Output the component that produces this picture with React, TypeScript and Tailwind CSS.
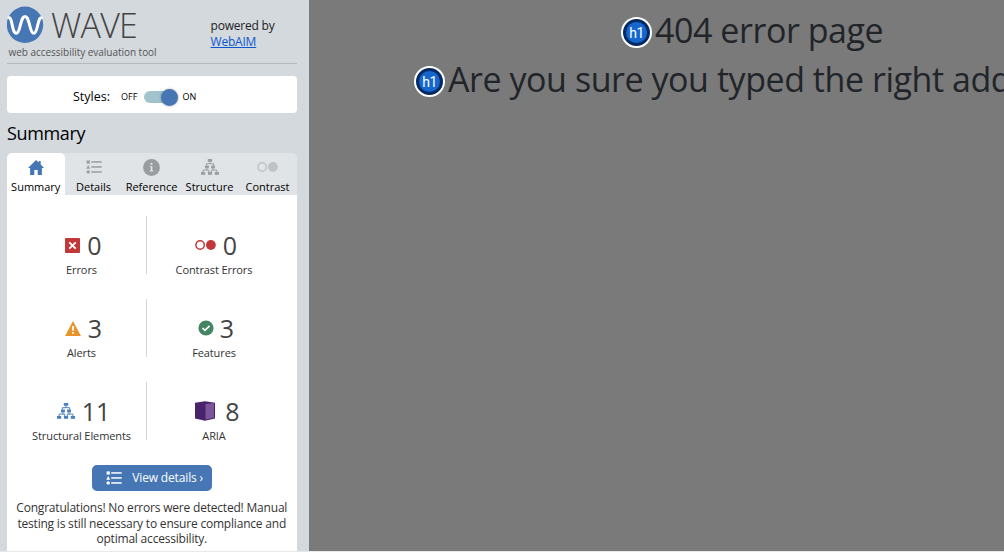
import type { ReactNode } from "react";

function ListIcon({ className }: { className?: string }) {
  return (
    <svg className={className} viewBox="0 0 16 14" fill="currentColor">
      <rect x="0.6" y="0.4" width="3.2" height="3.2" />
      <path d="M2.200 4.900 4.200 8.700H.2z" />
      <circle cx="2.2" cy="11.900" r="1.700" />
      <rect x="5.2" y="1.200" width="10.500" height="1.500" />
      <rect x="5.2" y="6.200" width="10.500" height="1.500" />
      <rect x="5.2" y="11.200" width="10.500" height="1.500" />
    </svg>
  );
}

function TreeIcon({ className }: { className?: string }) {
  return (
    <svg className={className} viewBox="0 0 18 16" fill="currentColor">
      <rect x="6.8" y="0" width="4.4" height="2.8" />
      <rect x="4" y="6.500" width="3.900" height="2.900" />
      <rect x="10.100" y="6.500" width="3.900" height="2.900" />
      <rect x="0" y="13" width="4.200" height="2.800" />
      <rect x="6.900" y="13" width="4.200" height="2.800" />
      <rect x="13.800" y="13" width="4.200" height="2.800" />
      <path
        d="M9 2.800v1.900M5.400 6.500V4.700h7.200v1.800M5.900 9.200v1.900M12.100 9.200v1.900M2.100 13v-1.900h5.600V13M10.300 13v-1.900h5.600V13"
        fill="none"
        stroke="currentColor"
        strokeWidth="1"
      />
    </svg>
  );
}

function ContrastIcon({ className }: { className?: string }) {
  return (
    <svg className={className} viewBox="0 0 21 10">
      <circle cx="5.100" cy="5" r="4.200" fill="none" stroke="currentColor" strokeWidth="1.500" />
      <circle cx="15.900" cy="5" r="4.900" fill="currentColor" />
    </svg>
  );
}

function Tab({ label, icon, active }: { label: string; icon: ReactNode; active?: boolean }) {
  return (
    <div
      className={
        active
          ? "flex w-[57.500px] shrink-0 flex-col items-center rounded-t-[5px] bg-white"
          : "flex w-[58px] shrink-0 flex-col items-center"
      }
    >
      <div className="flex h-[27px] items-center pt-[1px]">{icon}</div>
      <span className="whitespace-nowrap text-[11px] leading-[14px] text-black">{label}</span>
    </div>
  );
}

function Stat({ icon, value, label, first }: { icon: ReactNode; value: number; label: string; first?: boolean }) {
  return (
    <div
      className={
        first
          ? "flex h-[58px] w-[140px] flex-col items-center border-r border-[#cfd4d8] pl-[10px]"
          : "flex h-[58px] w-[134px] flex-col items-center"
      }
    >
      <div className="flex h-[46px] items-center pl-[4px] pt-[12px]">
        {icon}
        <span className="text-[25px] leading-[34px] text-[#444]">{value}</span>
      </div>
      <span className="whitespace-nowrap text-[11px] leading-[15px] tracking-[-0.1px] text-[#333]">{label}</span>
    </div>
  );
}

function HeadingBadge() {
  return (
    <span className="mt-[5px] flex size-[31px] shrink-0 items-center justify-center rounded-full bg-white">
      <span className="flex size-[27px] items-center justify-center rounded-full border-[3.5px] border-[#042a63] bg-[#1567cf] pt-[1px] font-['Roboto',sans-serif] text-[14px] leading-none tracking-[-0.5px] text-white">
        h1
      </span>
    </span>
  );
}

export default function App() {
  return (
    <div className="flex h-[552px] w-[1004px] overflow-hidden bg-[#7a7a7a] font-['Open_Sans',sans-serif]">
      <aside className="h-[552px] w-[309px] shrink-0 border-b border-[#e7eaeb] bg-[#d4d9dd] pl-[7px]">
        <header className="flex h-[64px] w-[289.5px] border-b border-[#b4babe]">
          <div className="w-[203.5px] pt-[6px]">
            <div className="flex h-[37px] items-center">
              <svg className="size-[37px]" viewBox="0 0 37 37">
                <circle cx="18" cy="18.800" r="18.200" fill="#4677b4" />
                <path
                  d="M1 12.500C3 10.500 4 13 5 18S6.700 27.300 9.300 27.300 12.500 22 13.800 17.500 15.800 10.500 18 10.500 20.900 13 22.200 17.500 24.100 27.300 26.700 27.300 30 22 31 18 33 10.500 35.200 12.500"
                  fill="none"
                  stroke="#fff"
                  strokeWidth="3"
                />
              </svg>
              <span className="ml-[7px] pt-[2px] text-[34px] font-light leading-[35px] tracking-[-0.8px] text-[#444]">
                WAVE
              </span>
            </div>
            <div className="ml-[1.5px] whitespace-nowrap text-[10px] leading-[19px] tracking-[-0.03px] text-[#555]">
              web accessibility evaluation tool
            </div>
          </div>
          <div className="pt-[18px] text-[12px] leading-[16px] tracking-[-0.2px] text-[#222]">
            powered by
            <br />
            <a className="text-[#0b57d0] underline">WebAIM</a>
          </div>
        </header>

        <section className="mt-[12px] flex h-[37px] w-[289.5px] items-center rounded-[4px] bg-white pl-[66px] pt-[5px] text-black">
          <span className="w-[48px] text-[12.5px]">Styles:</span>
          <span className="w-[23px] text-[9px]">OFF</span>
          <span className="flex h-[12px] w-[34px] items-center justify-end rounded-full bg-[#a1c3cb]">
            <span className="size-[17px] shrink-0 rounded-full bg-[#4677b4] shadow-[0_0_2px_1px_rgba(0,0,0,0.15)]" />
          </span>
          <span className="ml-[4.500px] text-[9px]">ON</span>
        </section>

        <h1 className="mt-[8px] h-[32px] text-[18px] leading-[24px] tracking-[-0.35px] text-black">Summary</h1>

        <nav className="flex h-[42px] w-[289.5px] rounded-t-[5px] bg-[#e0e4e6]">
          <Tab
            active
            label="Summary"
            icon={
              <svg className="h-[15px] w-[16px]" viewBox="0 0 16 15" fill="#4677b4">
                <path d="M8 0 0 7.900h2.100V15h4.200v-5h3.400v5h4.200V7.900H16l-3.300-3.400V1h-2v1.600z" />
              </svg>
            }
          />
          <Tab label="Details" icon={<ListIcon className="h-[14px] w-[16px] text-[#9c9fa1]" />} />
          <Tab
            label="Reference"
            icon={
              <svg className="size-[17px]" viewBox="0 0 17 17">
                <circle cx="8.500" cy="8.500" r="8.400" fill="#999c9e" />
                <circle cx="8.500" cy="4.800" r="1.100" fill="#e0e4e6" />
                <path d="M6.800 7.200h2.600v4.400h1v1H6.700v-1h1V8.200h-.9z" fill="#e0e4e6" />
              </svg>
            }
          />
          <Tab label="Structure" icon={<TreeIcon className="h-[16px] w-[18px] text-[#9c9fa1]" />} />
          <Tab label="Contrast" icon={<ContrastIcon className="h-[10px] w-[21px] text-[#bfc3c5]" />} />
        </nav>

        <main className="flex h-[356px] w-[289.5px] flex-col bg-white pt-[21px]">
          <div className="flex flex-col gap-[25px]">
            <div className="flex">
              <Stat
                first
                value={0}
                label="Errors"
                icon={
                  <svg className="mr-[7px] size-[15px]" viewBox="0 0 15 15">
                    <rect width="15" height="15" rx="1" fill="#c23838" />
                    <path d="m4.300 4.300 6.400 6.400m0-6.400-6.400 6.400" stroke="#fff" strokeWidth="1.800" />
                  </svg>
                }
              />
              <Stat value={0} label="Contrast Errors" icon={<ContrastIcon className="mr-[7px] h-[10px] w-[21px] text-[#c23838]" />} />
            </div>
            <div className="flex">
              <Stat
                first
                value={3}
                label="Alerts"
                icon={
                  <svg className="mr-[7px] h-[15px] w-[16px]" viewBox="0 0 16 15">
                    <path d="M8 0 16 15H0z" fill="#ea932d" />
                    <path d="M7.100 5h1.800v4.800H7.100zM7.100 11h1.800v1.800H7.100z" fill="#fff" />
                  </svg>
                }
              />
              <Stat
                value={3}
                label="Features"
                icon={
                  <svg className="mr-[6px] size-[16px]" viewBox="0 0 16 16">
                    <circle cx="8" cy="8" r="7.600" fill="#448563" />
                    <path d="m4.500 8 2.400 2.400 4.700-4.600" fill="none" stroke="#fff" strokeWidth="1.700" />
                  </svg>
                }
              />
            </div>
            <div className="flex">
              <Stat first value={11} label="Structural Elements" icon={<TreeIcon className="mr-[7px] h-[16px] w-[18px] text-[#4a80bf]" />} />
              <Stat
                value={8}
                label="ARIA"
                icon={
                  <svg className="ml-[3px] mr-[10px] h-[20px] w-[20px]" viewBox="0 0 20 20">
                    <path d="m0 1.700 10-1.500 10 1.500v15.800L10 19.700 0 17.500z" fill="#48246c" />
                    <path d="m10.500 3 8.500-1v14.700l-8.500 1.800z" fill="#7b5597" />
                  </svg>
                }
              />
            </div>
          </div>
          <button className="mx-auto mt-[25px] flex h-[26px] w-[120px] shrink-0 items-center whitespace-nowrap rounded-[5px] bg-[#4677b4] pl-[14px] text-[12px] tracking-[-0.15px] text-white">
            <ListIcon className="mr-[10.5px] h-[14px] w-[16px]" />
            View details ›
          </button>
          <p className="mt-[9px] whitespace-nowrap text-center text-[12px] leading-[15.7px] tracking-[-0.2px] text-[#333]">
            Congratulations! No errors were detected! Manual
            <br />
            testing is still necessary to ensure compliance and
            <br />
            optimal accessibility.
          </p>
        </main>
      </aside>

      <div className="h-[552px] grow overflow-hidden border-b border-[#e7eaeb] bg-[#7a7a7a] pt-[6px] text-[34px] leading-[48px] tracking-[-0.45px] text-[#212529]">
        <div className="flex h-[48px] items-center whitespace-nowrap pl-[312px]">
          <HeadingBadge />
          <span className="ml-[3px]">404 error page</span>
        </div>
        <div className="flex h-[49px] items-center whitespace-nowrap pl-[105px]">
          <HeadingBadge />
          <span className="ml-[3px]">Are you sure you typed the right address?</span>
        </div>
      </div>
    </div>
  );
}
